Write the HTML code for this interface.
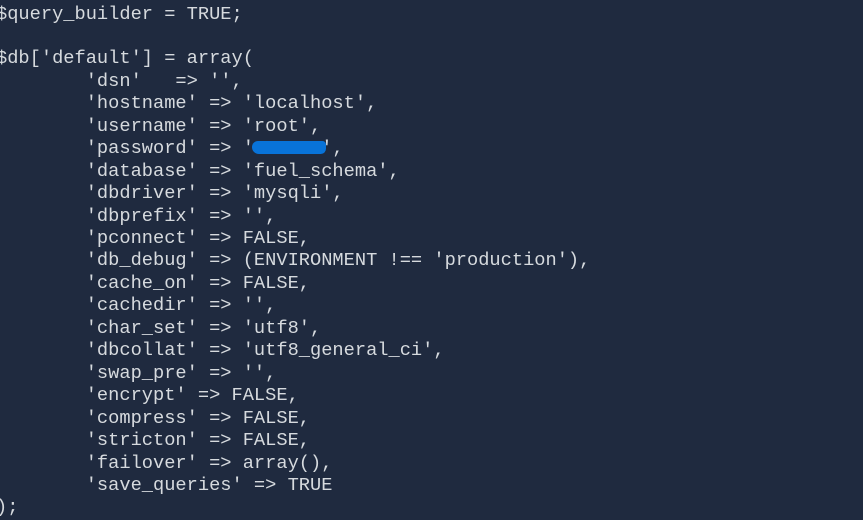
<!DOCTYPE html>
<html><head><style>
html,body{margin:0;padding:0;width:863px;height:520px;overflow:hidden;background:#1f2a3f;}
pre{position:absolute;left:-4px;top:2.5px;margin:0;font-family:"Liberation Mono",monospace;font-size:18.7px;line-height:22.45px;color:#d6dade;white-space:pre;}
.blob{position:absolute;left:252px;top:141px;width:74px;height:13px;background:#0873d9;border-radius:7px 4px 6px 8px;}
</style></head><body>
<pre>$query_builder = TRUE;

$db['default'] = array(
        'dsn'   => '',
        'hostname' => 'localhost',
        'username' => 'root',
        'password' => '      ',
        'database' => 'fuel_schema',
        'dbdriver' => 'mysqli',
        'dbprefix' => '',
        'pconnect' => FALSE,
        'db_debug' => (ENVIRONMENT !== 'production'),
        'cache_on' => FALSE,
        'cachedir' => '',
        'char_set' => 'utf8',
        'dbcollat' => 'utf8_general_ci',
        'swap_pre' => '',
        'encrypt' => FALSE,
        'compress' => FALSE,
        'stricton' => FALSE,
        'failover' => array(),
        'save_queries' => TRUE
);</pre>
<div class="blob"></div>
</body></html>
